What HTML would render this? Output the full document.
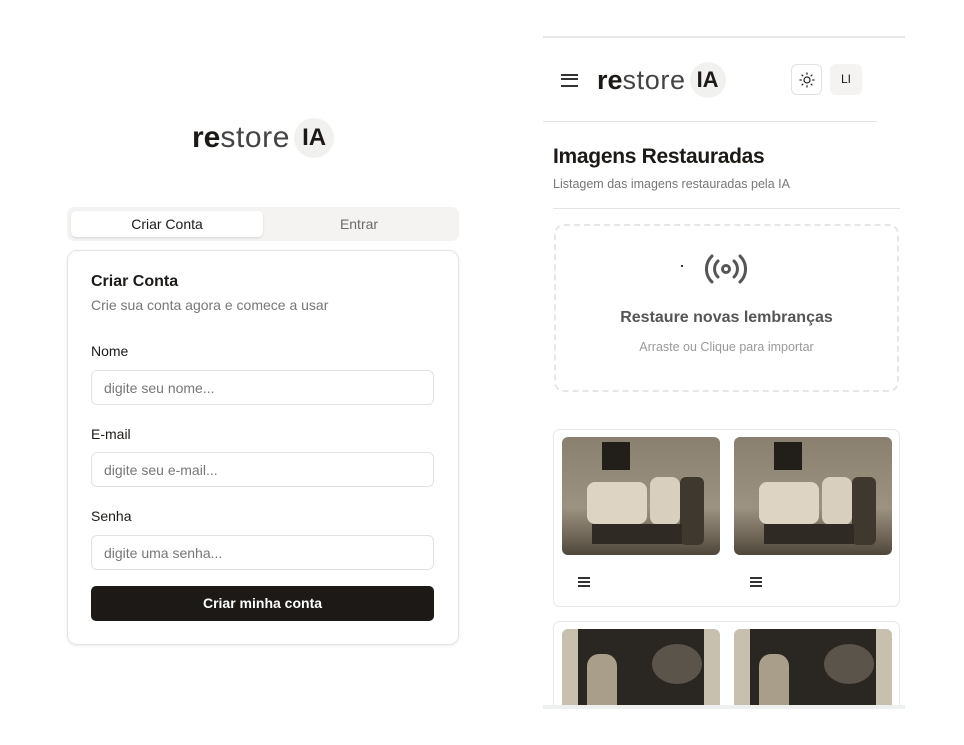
<!DOCTYPE html>
<html><head><meta charset="utf-8"><style>
*{box-sizing:border-box;margin:0;padding:0}
body{width:964px;height:745px;background:#fff;font-family:"Liberation Sans",sans-serif;position:relative;overflow:hidden;color:#1c1917}
.a{position:absolute}
.logo{display:flex;align-items:center;white-space:nowrap;color:#444;letter-spacing:0.6px}
.logo b{color:#1c1917;letter-spacing:0}
.logo .ia{display:inline-block;background:#f1f1f0;border-radius:50%;text-align:center;font-weight:bold;color:#1c1917;margin-left:4px;letter-spacing:0}
.inp{position:absolute;left:91px;width:343px;height:35px;border:1px solid #e2e2e2;border-radius:6px;font-size:14px;color:#777;padding:9px 12px}
.lbl{position:absolute;left:91px;font-size:14px;color:#1c1917}
.ph{position:absolute;border-radius:6px;width:158px;height:118px;overflow:hidden;background:linear-gradient(180deg,#8a8070 0,#9c9282 60%,#6e6556 85%,#4e4639 100%)}
.ph i{position:absolute;display:block}
.ph2{background:linear-gradient(90deg,#c8c0ae 0 10%,#2a2622 10% 90%,#c8c0ae 90%)}
.menu{position:absolute;width:12px;height:10px;border-top:2px solid #333;border-bottom:2px solid #333}
.menu:after{content:"";position:absolute;left:0;right:0;top:2px;border-top:2px solid #333}
</style></head><body>
<div class="a logo" style="left:192px;top:118px;height:40px;font-size:30px"><b>re</b>store<span class="ia" style="width:40px;height:40px;line-height:40px;font-size:24px">IA</span></div>
<div class="a" style="left:67px;top:207px;width:392px;height:34px;background:#f4f3f2;border-radius:7px"></div>
<div class="a" style="left:71px;top:211px;width:192px;height:26px;background:#fff;border-radius:5px;box-shadow:0 1px 2px rgba(0,0,0,.12);text-align:center;font-size:14px;line-height:26px">Criar Conta</div>
<div class="a" style="left:263px;top:211px;width:192px;height:26px;text-align:center;font-size:14px;line-height:26px;color:#6b6b6b">Entrar</div>
<div class="a" style="left:67px;top:250px;width:392px;height:395px;border:1px solid #e4e4e4;border-radius:10px;box-shadow:0 1px 3px rgba(0,0,0,.08)"></div>
<div class="a" style="left:91px;top:273px;font-size:16px;font-weight:bold;color:#1c1917">Criar Conta</div>
<div class="a" style="left:91px;top:297px;font-size:14px;color:#777">Crie sua conta agora e comece a usar</div>
<div class="lbl" style="top:343px">Nome</div>
<div class="inp" style="top:370px">digite seu nome...</div>
<div class="lbl" style="top:426px">E-mail</div>
<div class="inp" style="top:452px">digite seu e-mail...</div>
<div class="lbl" style="top:508px">Senha</div>
<div class="inp" style="top:535px">digite uma senha...</div>
<div class="a" style="left:91px;top:586px;width:343px;height:35px;background:#1c1917;border-radius:5px;color:#fff;font-size:14px;font-weight:bold;text-align:center;line-height:35px">Criar minha conta</div>

<div class="a" style="left:543px;top:36px;width:362px;height:2px;background:#e8e8e8"></div>
<div class="menu" style="left:561px;top:74px;width:17px;height:13px"></div>
<div class="a logo" style="left:597px;top:62px;height:36px;font-size:27px"><b>re</b>store<span class="ia" style="width:36px;height:36px;line-height:36px;font-size:22px">IA</span></div>
<div class="a" style="left:791px;top:64px;width:31px;height:31px;border:1px solid #e2e2e2;border-radius:6px;text-align:center">
<svg width="18" height="18" viewBox="0 0 24 24" style="margin-top:6px" fill="none" stroke="#222" stroke-width="1.6"><circle cx="12" cy="12" r="4"/><path d="M12 2v3M12 19v3M2 12h3M19 12h3M4.9 4.9l2 2M17.1 17.1l2 2M4.9 19.1l2-2M17.1 6.9l2-2"/></svg></div>
<div class="a" style="left:830px;top:64px;width:32px;height:31px;background:#f4f3f2;border-radius:6px;text-align:center;line-height:31px;font-size:12px">LI</div>
<div class="a" style="left:543px;top:121px;width:334px;height:1px;background:#e4e4e4"></div>
<div class="a" style="left:553px;top:145px;font-size:21px;font-weight:bold;letter-spacing:-0.3px">Imagens Restauradas</div>
<div class="a" style="left:553px;top:177px;font-size:12.5px;color:#777">Listagem das imagens restauradas pela IA</div>
<div class="a" style="left:553px;top:208px;width:347px;height:1px;background:#e4e4e4"></div>
<div class="a" style="left:554px;top:224px;width:345px;height:168px;border:2px dashed #e6e6e6;border-radius:10px"></div>
<div class="a" style="left:681px;top:265px;width:2px;height:2px;background:#333"></div>
<svg class="a" style="left:705px;top:252px" width="42" height="34" viewBox="0 0 42 34" fill="none" stroke="#555" stroke-width="3" stroke-linecap="round"><circle cx="21" cy="17" r="3.5"/><path d="M13 9a11 11 0 0 0 0 16M29 9a11 11 0 0 1 0 16M7 4a18 18 0 0 0 0 26M35 4a18 18 0 0 1 0 26"/></svg>
<div class="a" style="left:553px;top:309px;width:347px;text-align:center;font-size:16px;font-weight:bold;color:#555">Restaure novas lembranças</div>
<div class="a" style="left:553px;top:340px;width:347px;text-align:center;font-size:12.5px;color:#999">Arraste ou Clique para importar</div>
<div class="a" style="left:553px;top:429px;width:347px;height:178px;border:1px solid #e6e6e6;border-radius:7px"></div>
<div class="ph" style="left:562px;top:437px"><i style="left:40px;top:5px;width:28px;height:28px;background:#221e1a"></i><i style="left:25px;top:45px;width:60px;height:42px;background:#ddd4c4;border-radius:8px"></i><i style="left:88px;top:40px;width:30px;height:48px;background:#d8cfbe;border-radius:8px"></i><i style="left:118px;top:40px;width:24px;height:68px;background:#3e382f;border-radius:6px"></i><i style="left:30px;top:87px;width:90px;height:20px;background:#2f2a24"></i></div>
<div class="ph" style="left:734px;top:437px"><i style="left:40px;top:5px;width:28px;height:28px;background:#221e1a"></i><i style="left:25px;top:45px;width:60px;height:42px;background:#ddd4c4;border-radius:8px"></i><i style="left:88px;top:40px;width:30px;height:48px;background:#d8cfbe;border-radius:8px"></i><i style="left:118px;top:40px;width:24px;height:68px;background:#3e382f;border-radius:6px"></i><i style="left:30px;top:87px;width:90px;height:20px;background:#2f2a24"></i></div>
<div class="menu" style="left:578px;top:577px"></div>
<div class="menu" style="left:750px;top:577px"></div>
<div class="a" style="left:553px;top:621px;width:347px;height:100px;border:1px solid #e6e6e6;border-radius:7px"></div>
<div class="ph ph2" style="left:562px;top:629px;height:90px"><i style="left:25px;top:25px;width:30px;height:60px;background:#a89e8a;border-radius:12px 12px 0 0"></i><i style="left:90px;top:15px;width:50px;height:40px;background:#5a544a;border-radius:50%"></i></div>
<div class="ph ph2" style="left:734px;top:629px;height:90px"><i style="left:25px;top:25px;width:30px;height:60px;background:#a89e8a;border-radius:12px 12px 0 0"></i><i style="left:90px;top:15px;width:50px;height:40px;background:#5a544a;border-radius:50%"></i></div>
<div class="a" style="left:543px;top:705px;width:362px;height:40px;background:#fff;border-top:4px solid #eef0f0"></div>
</body></html>
